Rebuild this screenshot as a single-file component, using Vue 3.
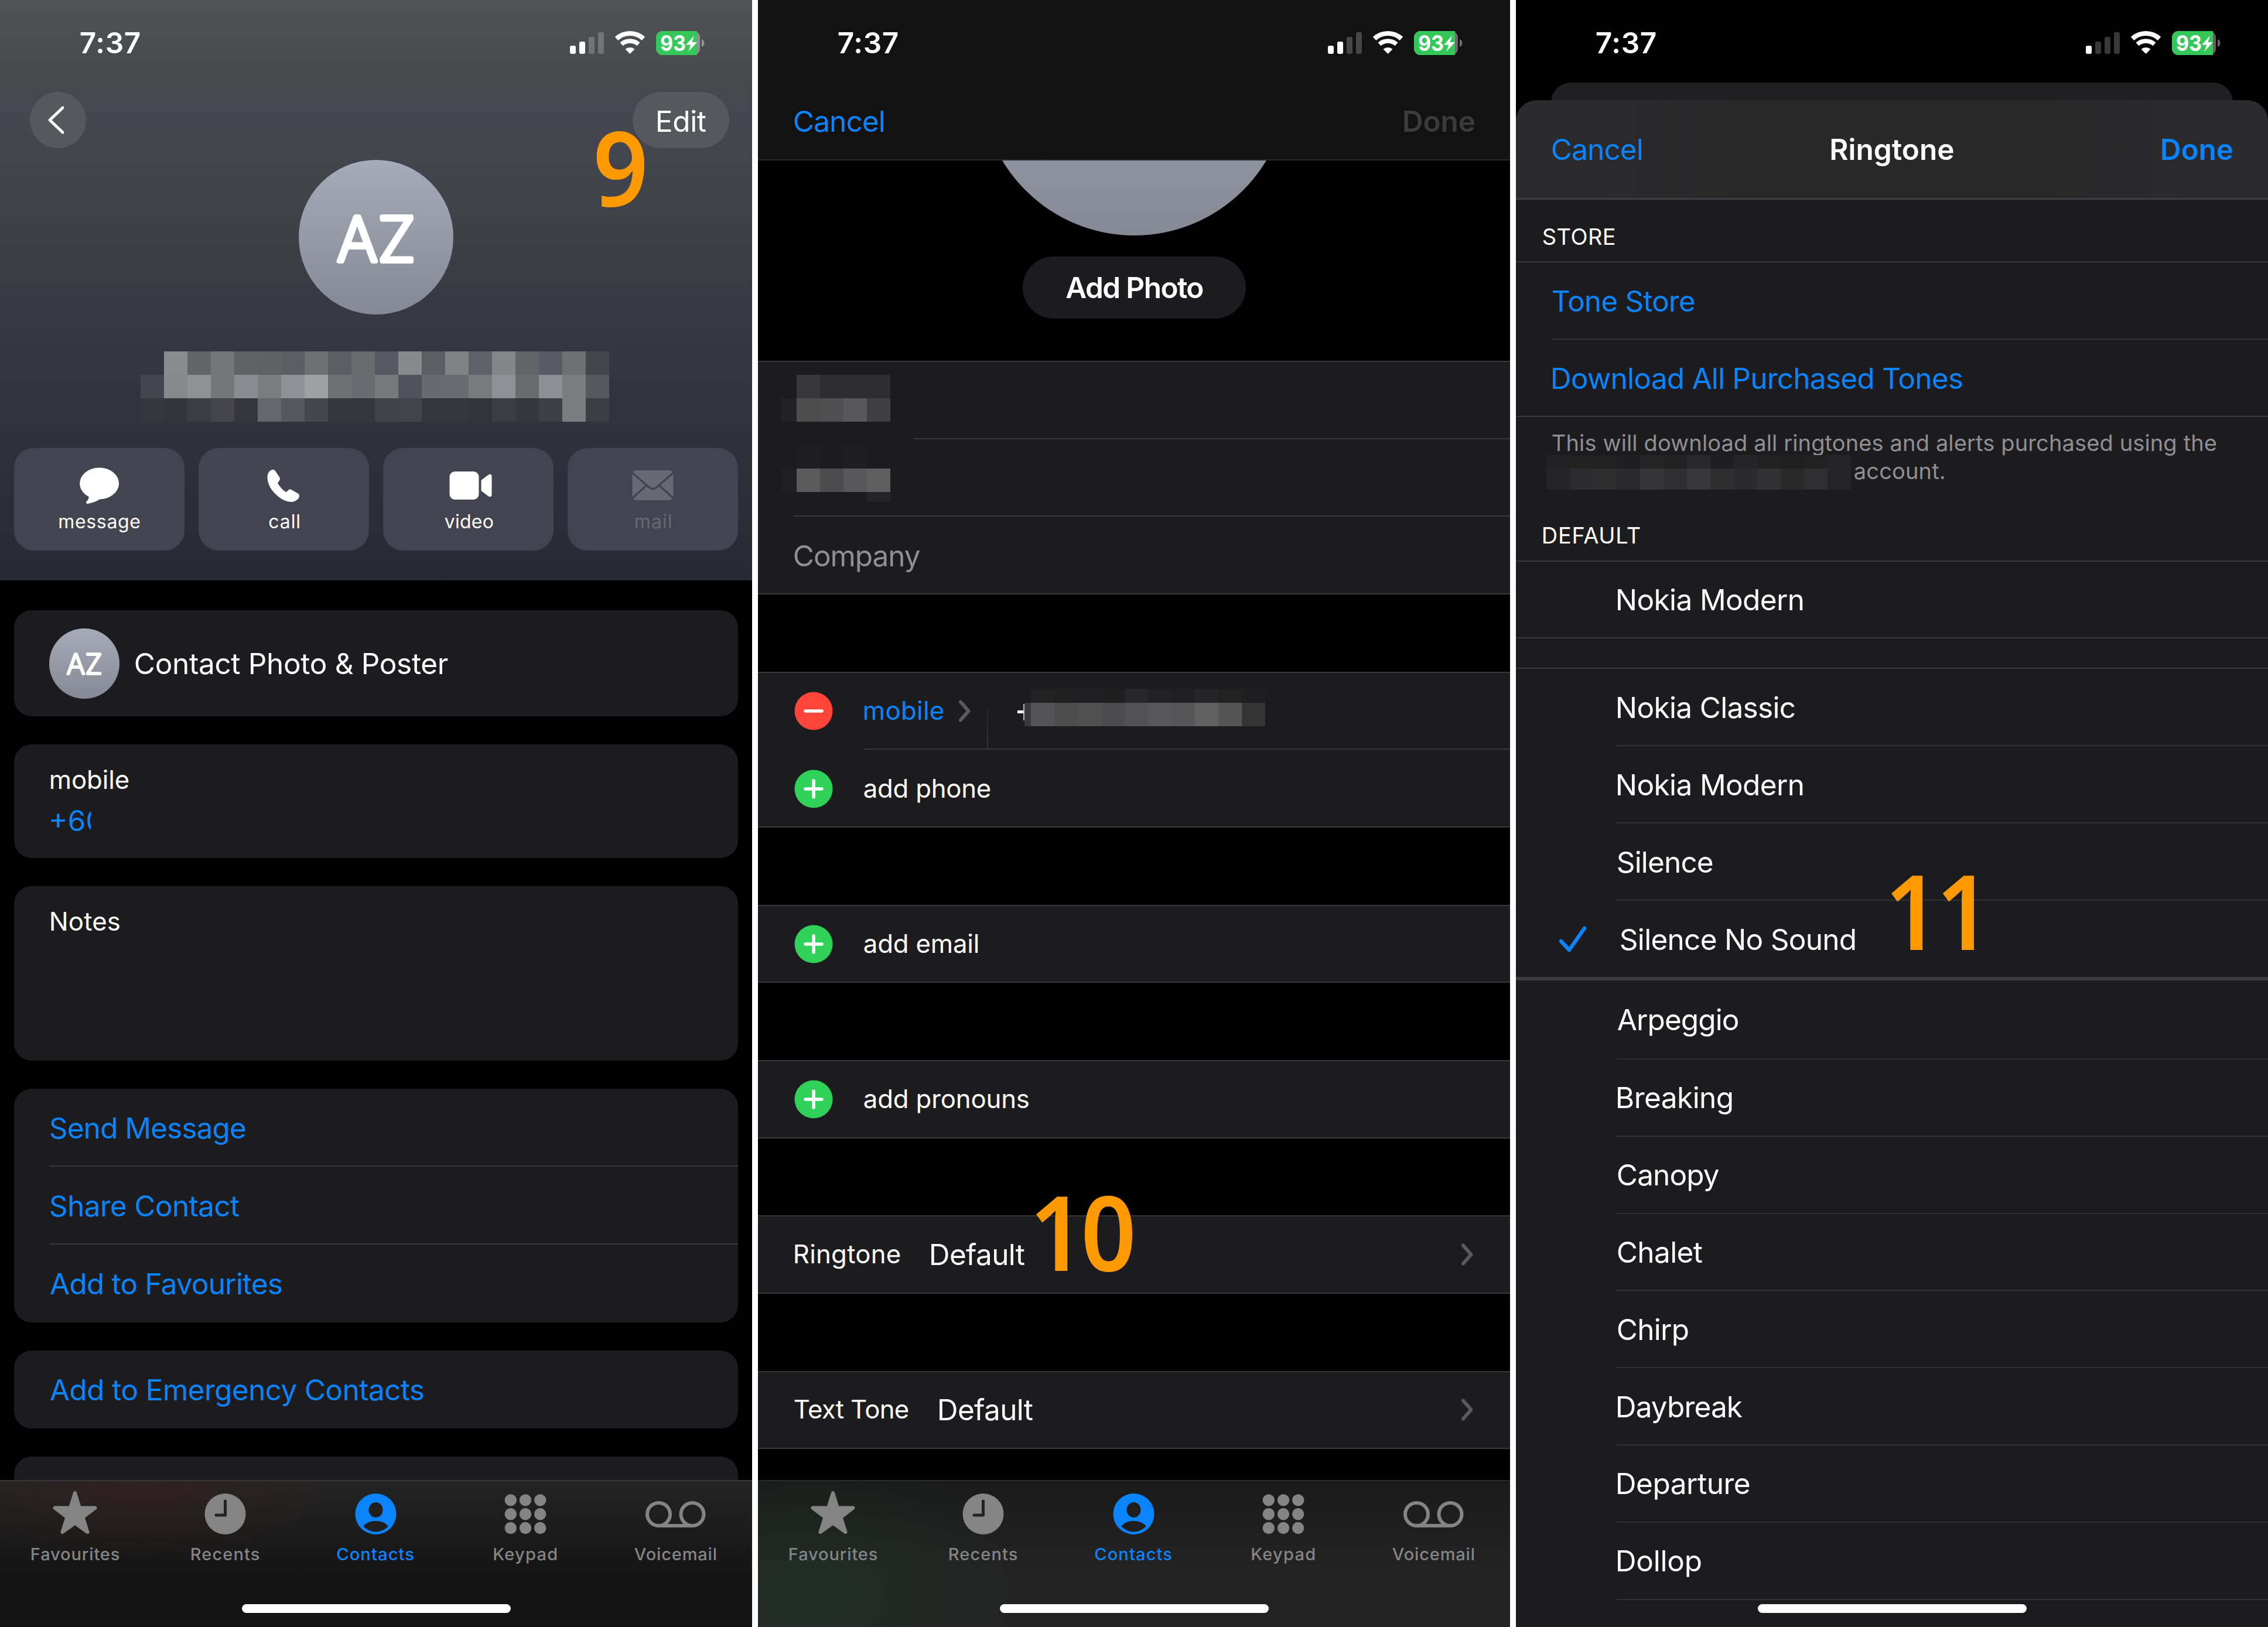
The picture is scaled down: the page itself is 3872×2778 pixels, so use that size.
<script setup>
import { h } from 'vue'

// Tracks a label so that its inked width equals the given number of pixels,
// and trims the side bearings so the box hugs the glyphs.
const nudge = 0.8
const pen = document.createElement('canvas').getContext('2d')
const vFit = {
  mounted(el, { value }) {
    const cs = getComputedStyle(el)
    pen.font = `${cs.fontWeight} ${cs.fontSize} ${cs.fontFamily}`
    const text = el.textContent.trim()
    const m = pen.measureText(text)
    const range = document.createRange()
    range.selectNodeContents(el)
    const natural = range.getBoundingClientRect().width
    const left = -m.actualBoundingBoxLeft
    const right = m.width - m.actualBoundingBoxRight
    const gaps = text.length - 1
    const spacing = gaps && value ? (value - (natural - left - right)) / gaps : 0
    el.style.letterSpacing = `${spacing}px`
    el.style.marginLeft = `${nudge - left}px`
    el.style.marginRight = `${-nudge - right - spacing}px`
  },
}

const Avatar = () =>
  h('svg', { viewBox: '0 0 264 264', class: 'avatar-svg' }, [
    h('text', {
      x: 65.5, y: 172.5, 'font-family': 'Inter, sans-serif',
      'font-size': 105, 'font-weight': 240, fill: '#fff', stroke: '#fff',
      'stroke-width': 8, 'stroke-linejoin': 'round', textLength: 134,
    }, 'AZ'),
  ])

const Chevron = () =>
  h('svg', { width: 22, height: 38, viewBox: '0 0 22 38' }, [
    h('path', {
      d: 'M4 3.5 L17.5 19 L4 34.5', fill: 'none', stroke: '#5a5a5e',
      'stroke-width': 6, 'stroke-linecap': 'round', 'stroke-linejoin': 'round',
    }),
  ])

const Mosaic = (props) =>
  h('div', { class: 'mosaic' }, props.rows.map((row) =>
    h('div', { style: { display: 'flex', height: `${row.h}px` } }, row.cells.map((c) =>
      h('i', { style: { width: `${c[1] || 40}px`, background: c[0] || 'transparent' } })))))
Mosaic.props = ['rows']

const px = (h, list, lead) => ({
  h,
  cells: [...(lead ? [lead] : []), ...list.split(' ').map((c) => [c === '-' ? '' : `#${c}`])],
})

const nameMosaic = [
  px(40, '- 8a8b8f 626366 757679 616265 606164 5b5f63 6e6f73 5a5d61 6a6b6f 555962 88898d 5b5e62 818286 60616a 85868a 626367 595a63 6e6f73 44464d'),
  px(40, '42454d 86878a 8f9094 747579 8b8c91 7a7c80 8f9095 9fa0a4 6f7074 6a6a73 78797c 50535b 686871 6a6a73 797a7e 909196 6a6b6f 8e8f94 7a7b7f 55585f'),
  px(40, '34363d 32353c 3b3d45 45434b 34363d 66666f 57575f 45474e 34363d 34363d 404249 42434b 34363d 34363d 32343b 3b3d44 34363d 3d3e46 7b7c80 3c3e45'),
]
const firstMosaic = [px(40, '38383a 2d2d2f 2d2d2f 2d2d2f', ['', 27]), px(40, '4d4d4d 4f4f51 58585a 3f3f41', ['#212123', 27])]
const lastMosaic = [
  px(40, '1f1f21 1d1d1f 1f1f21 1c1c1e', ['', 27]),
  px(40, '5b5b5b 4c4c4e 575759 5f5f5f', ['#202022', 27]),
  px(17, '- - - 252527', ['', 27]),
]
const phoneMosaic = [
  px(24, '212122 202021 202022 1f1f20 272729 222224 202022 242426 212122 1e1e20', ['', 11]),
  px(40, '555557 4d4d4d 505050 4b4b4d 515153 575759 565658 616161 555555 343434', ['#3a3a3a', 11]),
]
const accountMosaic = [
  px(23, '222225 212122 212122 1f1f21 242425 222223 29292c 1f1f21 252528 212122 202021 212122 252528'),
  px(36, '252527 2c2c2f 2d2d2e 2a2a2d 353538 2f2f31 38383b 2e2e2f 2b2b2e 323234 29292a 2f2f32 252527'),
]

const phones = [
  { id: 'contact', bars: 2 },
  { id: 'edit', bars: 2 },
  { id: 'ringtone', bars: 1 },
]
const bars = [
  { x: 0, y: 25, h: 14 },
  { x: 16, y: 18, h: 21 },
  { x: 32, y: 10, h: 29 },
  { x: 48, y: 2, h: 37 },
]
const actions = [
  { id: 'message', w: 138 },
  { id: 'call', w: 52 },
  { id: 'video', w: 83 },
  { id: 'mail', w: 61 },
]
const links = [
  { t: 'Send Message', w: 333 },
  { t: 'Share Contact', w: 323 },
  { t: 'Add to Favourites', w: 395 },
]
const tabs = [
  { id: 'star', t: 'Favourites', w: 150 },
  { id: 'clock', t: 'Recents', w: 116 },
  { id: 'person', t: 'Contacts', w: 131 },
  { id: 'keys', t: 'Keypad', w: 107 },
  { id: 'tape', t: 'Voicemail', w: 140 },
]
const adders = [
  { t: 'add email', w: 195 },
  { t: 'add pronouns', w: 281 },
]
const tones = [
  { t: 'Ringtone', w: 180 },
  { t: 'Text Tone', w: 194 },
]
const custom = [
  { t: 'Nokia Classic', w: 302 },
  { t: 'Nokia Modern', w: 316 },
  { t: 'Silence', w: 162 },
  { t: 'Silence No Sound', w: 400, on: true },
]
const builtin = [
  { t: 'Arpeggio', w: 206 },
  { t: 'Breaking', w: 195 },
  { t: 'Canopy', w: 173 },
  { t: 'Chalet', w: 145 },
  { t: 'Chirp', w: 120 },
  { t: 'Daybreak', w: 213 },
  { t: 'Departure', w: 225 },
  { t: 'Dollop', w: 142 },
]
</script>

<template>
  <main class="board">
    <section v-for="p in phones" :key="p.id" class="phone" :class="p.id">
      <div class="status">
        <span v-fit="101" class="time">7:37</span>
        <svg width="230" height="41" viewBox="0 0 230 41">
          <rect v-for="(b, i) in bars" :key="i" :x="b.x" :y="b.y" width="10" :height="b.h" rx="3"
            fill="#fff" :opacity="i < p.bars ? 1 : 0.22" />
          <g fill="none" stroke="#fff">
            <path d="M79.5 13 A34 34 0 0 1 125.5 13" stroke-width="8" />
            <path d="M88 22.5 A22 22 0 0 1 117 22.5" stroke-width="7.5" />
          </g>
          <path d="M102.500 39 L94.500 31 A12 12 0 0 1 110.500 31 Z" fill="#fff" />
          <rect x="147" y="0" width="75" height="41" rx="11" fill="#fff" fill-opacity=".38" />
          <path d="M158 0 H217 V41 H158 A11 11 0 0 1 147 30 V11 A11 11 0 0 1 158 0Z" fill="#34c759" />
          <path d="M225 14 a7 7 0 0 1 0 13z" fill="#fff" fill-opacity=".4" />
          <text x="154" y="34" font-size="37.500" font-weight="700" textLength="44" lengthAdjust="spacingAndGlyphs" fill="#fff">93</text>
          <path d="M212 8 L198 23.500 H206 L202.500 35 L217 19 H208.500Z" fill="#fff" />
        </svg>
      </div>

      <template v-if="p.id === 'contact'">
        <div class="hero-nav">
          <div class="back">
            <svg width="32" height="50" viewBox="0 0 32 50">
              <path d="M27 4 L5 25 L27 46" fill="none" stroke="#fff" stroke-width="5" stroke-linecap="round" stroke-linejoin="round" />
            </svg>
          </div>
          <div class="edit-pill"><span v-fit="83">Edit</span></div>
        </div>
        <div class="avatar"><Avatar /></div>
        <Mosaic class="name" :rows="nameMosaic" />
        <div class="actions">
          <div v-for="a in actions" :key="a.id" class="action" :class="{ off: a.id === 'mail' }">
            <svg width="100" height="66" viewBox="0 0 100 66">
              <g v-if="a.id === 'message'" fill="#fff">
                <ellipse cx="49.600" cy="28.500" rx="33.500" ry="27" />
                <path d="M32 46 q1 9 -5 14 q0 4 4 3 q14 -3 21 -9z" />
              </g>
              <path v-else-if="a.id === 'call'" fill="#fff"
                d="M28.500 5.500 C24 7 21.500 12 21.500 19 C22 30 28 40 37 48 C45 56 55 60.500 64 60 C71 59 76 54 76 50 C76 47 74 45.500 71 44 L63 39.500 C61 38 59 38 57 40 L54 43 C50 42 44 36 39 28 L42 23.500 C43.500 21 43 19.500 42 17.500 L35 7 C33 5 31 4.600 28.500 5.500Z" />
              <g v-else-if="a.id === 'video'" fill="#fff">
                <rect x="17.500" y="8" width="50" height="48" rx="9" />
                <path d="M71.500 23 L84 13.500 Q89 11 89.500 16 V48 Q89 53 84 50.500 L71.500 41Z" />
              </g>
              <g v-else>
                <rect x="14.500" y="6" width="70" height="51" rx="7" fill="#686a73" />
                <path d="M13 9 L43 35 Q49.500 40.500 56 35 L86 9 M13 55 L39 31.500 M86 55 L60 31.500" fill="none" stroke="#42454f" stroke-width="3.500" />
              </g>
            </svg>
            <span v-fit="a.w">{{ a.id }}</span>
          </div>
        </div>
        <div class="cards">
          <div class="card poster">
            <div class="avatar small"><Avatar /></div>
            <span v-fit="534">Contact Photo &amp; Poster</span>
          </div>
          <div class="card number">
            <div class="sub"><span v-fit="133">mobile</span></div>
            <div class="value blue"><span v-fit="0">+60</span></div>
          </div>
          <div class="card notes"><div class="sub"><span v-fit="117">Notes</span></div></div>
          <div class="card">
            <div v-for="l in links" :key="l.t" class="link blue"><span v-fit="l.w">{{ l.t }}</span></div>
          </div>
          <div class="card"><div class="link blue"><span v-fit="637">Add to Emergency Contacts</span></div></div>
          <div class="card"><div class="link"></div></div>
        </div>
        <div class="mark m9"><span v-fit="88">9</span></div>
      </template>

      <template v-else-if="p.id === 'edit'">
        <div class="edit-nav">
          <span v-fit="153" class="blue">Cancel</span>
          <span v-fit="121" class="dim">Done</span>
        </div>
        <div class="photo">
          <div class="big-circle"></div>
          <div class="add-photo"><span v-fit="233">Add Photo</span></div>
        </div>
        <div class="form">
          <div class="group">
            <div class="row first"><Mosaic :rows="firstMosaic" /></div>
            <div class="row last"><Mosaic :rows="lastMosaic" /></div>
            <div class="row company"><span v-fit="215">Company</span></div>
          </div>
          <div class="group">
            <div class="row inset phone-row">
              <svg width="66" height="66" viewBox="0 0 66 66">
                <circle cx="33" cy="33" r="32.500" fill="#ff453a" />
                <path d="M19 33 H47" stroke="#fff" stroke-width="5.500" stroke-linecap="round" />
              </svg>
              <div class="kind blue"><span v-fit="135">mobile</span></div>
              <Chevron />
              <div class="rule"></div>
              <div class="cut"></div>
              <Mosaic :rows="phoneMosaic" />
            </div>
            <div class="row adder">
              <svg width="66" height="66" viewBox="0 0 66 66">
                <circle cx="33" cy="33" r="32.500" fill="#30d158" />
                <path d="M19 33 H47 M33 19 V47" stroke="#fff" stroke-width="5.500" stroke-linecap="round" />
              </svg>
              <span v-fit="216">add phone</span>
            </div>
          </div>
          <div v-for="a in adders" :key="a.t" class="group">
            <div class="row adder">
              <svg width="66" height="66" viewBox="0 0 66 66">
                <circle cx="33" cy="33" r="32.500" fill="#30d158" />
                <path d="M19 33 H47 M33 19 V47" stroke="#fff" stroke-width="5.500" stroke-linecap="round" />
              </svg>
              <span v-fit="a.w">{{ a.t }}</span>
            </div>
          </div>
          <div v-for="t in tones" :key="t.t" class="group">
            <div class="row tone">
              <span v-fit="t.w" class="key">{{ t.t }}</span>
              <div class="val"><span v-fit="160">Default</span></div>
              <Chevron />
            </div>
          </div>
        </div>
        <div class="mark m10"><span v-fit="163">10</span></div>
      </template>

      <template v-else>
        <div class="back-sheet"></div>
        <div class="sheet">
          <div class="sheet-nav">
            <span v-fit="153" class="blue">Cancel</span>
            <span v-fit="209" class="title">Ringtone</span>
            <span v-fit="121" class="blue title">Done</span>
          </div>
          <div class="head store"><span v-fit="122">STORE</span></div>
          <div class="opt shop blue"><span v-fit="242">Tone Store</span></div>
          <div class="opt shop end blue"><span v-fit="699">Download All Purchased Tones</span></div>
          <div class="foot">
            <div><span v-fit="1134">This will download all ringtones and alerts purchased using the</span></div>
            <div class="second"><span v-fit="153">account.</span></div>
            <Mosaic class="account" :rows="accountMosaic" />
          </div>
          <div class="head default"><span v-fit="165">DEFAULT</span></div>
          <div class="opt full"><span v-fit="316">Nokia Modern</span></div>
          <div class="spacer"></div>
          <div v-for="o in custom" :key="o.t" class="opt" :class="{ on: o.on }">
            <svg v-if="o.on" class="check" width="48" height="46" viewBox="0 0 48 46">
              <path d="M4 26 L18 41 L44 4" fill="none" stroke="#0a84ff" stroke-width="6.500" stroke-linecap="round" stroke-linejoin="round" />
            </svg>
            <span v-fit="o.w">{{ o.t }}</span>
          </div>
          <div class="thick"></div>
          <div v-for="o in builtin" :key="o.t" class="opt tight"><span v-fit="o.w">{{ o.t }}</span></div>
        </div>
        <div class="mark m11"><span v-fit="138">11</span></div>
      </template>

      <nav v-if="p.id !== 'ringtone'" class="tabs">
        <div v-for="t in tabs" :key="t.id" class="tab" :class="{ active: t.id === 'person' }">
          <svg width="120" height="84" viewBox="0 0 120 84" fill="currentColor">
            <path v-if="t.id === 'star'" stroke="currentColor" stroke-width="6" stroke-linejoin="round"
              d="M60 9 L67.800 34.500 L94.500 34.500 L73.500 50.500 L81.500 76 L60 60.500 L38.500 76 L46.500 50.500 L25.500 34.500 L52.200 34.500Z" />
            <g v-else-if="t.id === 'clock'">
              <circle cx="60.500" cy="45" r="35" />
              <path d="M60.500 23 V47 H45" fill="none" stroke="#222" stroke-width="5" stroke-linecap="round" stroke-linejoin="round" />
            </g>
            <g v-else-if="t.id === 'person'">
              <circle cx="61.500" cy="45" r="35" />
              <ellipse cx="61.500" cy="38" rx="12" ry="13" fill="#1e1e1e" />
              <path d="M40 66 Q47.500 57 61.500 57 Q75.500 57 83 66 Q73.500 75.500 61.500 75.500 Q49.500 75.500 40 66" fill="#1e1e1e" />
            </g>
            <g v-else-if="t.id === 'keys'">
              <circle v-for="n in 9" :key="n" :cx="35.800 + ((n - 1) % 3) * 25.200" :cy="21.400 + Math.floor((n - 1) / 3) * 23.800" r="10.200" />
            </g>
            <g v-else fill="none" stroke="currentColor" stroke-width="6">
              <circle cx="32.500" cy="45.500" r="19.500" />
              <circle cx="90" cy="45.500" r="19.500" />
              <path d="M32.500 65 H90" />
            </g>
          </svg>
          <span v-fit="t.w">{{ t.t }}</span>
        </div>
      </nav>
      <div class="home"></div>
    </section>
  </main>
</template>

<style>
body {
  margin: 0;
  background: #fff;
}
.avatar-svg {
  display: block;
  width: 100%;
  height: 100%;
}
.mosaic {
  flex: none;
}
.mosaic i {
  flex: none;
}
</style>

<style scoped>
.board {
  display: flex;
  gap: 10px;
  width: 3872px;
  height: 2778px;
  font-family: Inter, sans-serif;
  font-size: 49.5px;
  line-height: 60px;
  color: #fff;
}
.board * {
  box-sizing: border-box;
}
.board span {
  display: inline-block;
  white-space: pre;
}
.phone {
  position: relative;
  display: flex;
  flex-direction: column;
  width: 1284px;
  height: 2778px;
  overflow: hidden;
  background: #000;
}
.phone svg {
  display: block;
  flex: none;
}
.blue {
  color: #0a84ff;
}
.status {
  display: flex;
  justify-content: space-between;
  align-items: center;
  flex: none;
  height: 146px;
  padding: 0 81px 0 137px;
}
.time {
  font-weight: 600;
}
.contact {
  background: linear-gradient(180deg, #515256 0, #46484c 145px, #454850 175px, #40424a 350px, #363941 540px, #2e3039 800px, #282a33 991px, #000 991px);
}
.hero-nav {
  display: flex;
  justify-content: space-between;
  margin-top: 11px;
  padding: 0 39px 0 51px;
}
.back,
.edit-pill {
  display: flex;
  align-items: center;
  height: 96px;
  border-radius: 48px;
  background: #56585d;
}
.back {
  width: 96px;
  padding-left: 29px;
}
.edit-pill {
  justify-content: center;
  width: 165px;
  padding: 4px 0 0 2px;
}
.avatar {
  flex: none;
  align-self: center;
  width: 264px;
  height: 264px;
  margin-top: 20px;
  border-radius: 50%;
  background: linear-gradient(180deg, #a5abb9, #858993);
}
.name {
  height: 120px;
  margin: 63px 0 0 240px;
}
.actions {
  display: flex;
  gap: 24px;
  margin-top: 45px;
  padding: 0 24px;
}
.action {
  display: flex;
  flex: 1;
  flex-direction: column;
  align-items: center;
  height: 175px;
  padding-top: 32px;
  border-radius: 34px;
  background: #42454f;
  font-size: 32px;
  line-height: 40px;
}
.action span {
  margin-top: 8px;
}
.off {
  color: #666872;
}
.cards {
  display: flex;
  flex-direction: column;
  gap: 48px;
  margin-top: 102px;
  padding: 0 24px;
}
.card {
  border-radius: 30px;
  background: #1c1c1e;
}
.poster {
  display: flex;
  align-items: center;
  gap: 26px;
  height: 181px;
  padding-left: 60px;
}
.avatar.small {
  width: 120px;
  height: 120px;
  margin: 0;
}
.number {
  height: 194px;
  padding: 31px 62px;
}
.notes {
  height: 298px;
  padding: 31px 62px;
}
.sub {
  display: flex;
  font-size: 43.7px;
}
.value {
  display: flex;
  width: 69px;
  margin-top: 9px;
  overflow: hidden;
}
.link {
  display: flex;
  align-items: center;
  position: relative;
  height: 133px;
  padding-left: 61px;
}
.link + .link::before {
  content: '';
  position: absolute;
  top: -2px;
  left: 60px;
  right: 0;
  height: 2px;
  background: #38383a;
}
.edit-nav {
  display: flex;
  justify-content: space-between;
  align-items: center;
  flex: none;
  height: 128px;
  padding: 0 61px 5px 61px;
}
.edit .status,
.edit-nav {
  background: #121212;
}
.edit-nav {
  border-bottom: 2px solid #2a2a2a;
}
.dim {
  color: #3b3b3b;
  font-weight: 600;
}
.photo {
  display: flex;
  flex: none;
  flex-direction: column;
  align-items: center;
  height: 342px;
  overflow: hidden;
}
.big-circle {
  flex: none;
  width: 525px;
  height: 525px;
  margin-top: -397px;
  border-radius: 50%;
  background: linear-gradient(180deg, #a5abb9 0, #8f939f 75%, #858993);
}
.add-photo {
  display: flex;
  justify-content: center;
  align-items: center;
  width: 381px;
  height: 106px;
  margin-top: 36px;
  padding-bottom: 1px;
  border-radius: 53px;
  background: #1c1c1e;
  font-weight: 600;
}
.form {
  --row: 132.67px;
  display: flex;
  flex-direction: column;
  gap: var(--row);
}
.group {
  background: #1c1c1e;
  box-shadow: inset 0 2px #38383a, inset 0 -1px #38383a, 0 1px #38383a;
}
.row {
  display: flex;
  align-items: center;
  position: relative;
  height: var(--row);
  padding-left: 62px;
}
.row + .row::before {
  content: '';
  position: absolute;
  top: -1px;
  left: 60px;
  right: 0;
  height: 2px;
  background: #38383a;
}
.first,
.last {
  align-items: flex-start;
  padding-left: 39px;
}
.first {
  padding-top: 24px;
}
.last {
  padding-top: 11px;
}
.row.last::before {
  left: 266px;
}
.company {
  padding-top: 3px;
  padding-left: 61px;
  color: #8f8f95;
}
.adder,
.phone-row,
.tone {
  font-size: 43.7px;
}
.adder,
.phone-row {
  padding-top: 2px;
}
.adder {
  gap: 52px;
}
.row.inset + .row::before {
  left: 180px;
}
.kind {
  display: flex;
  width: 161px;
  margin-left: 53px;
}
.rule {
  align-self: flex-end;
  width: 2px;
  height: 72px;
  margin-left: 27px;
  background: linear-gradient(180deg, #222224, #38383a);
}
.cut {
  width: 12px;
  height: 28px;
  margin: 4px 0 0 50px;
  border-right: 2px solid #b8b8b8;
  background: linear-gradient(#fff, #fff) 0 11px / 100% 5px no-repeat;
}
.phone-row .mosaic {
  align-self: flex-start;
  margin-top: 27px;
}
.tone {
  padding-right: 62px;
}
.tone .key {
  flex: none;
}
.val {
  display: flex;
  flex: 1;
  padding-left: 53px;
  font-size: 49.5px;
}
.back-sheet {
  flex: none;
  height: 60px;
  margin: -5px 60px 0;
  border-radius: 34px 34px 0 0;
  background: #202022;
}
.sheet {
  display: flex;
  flex-direction: column;
  flex: 1;
  margin-top: -30px;
  overflow: hidden;
  border-radius: 36px 36px 0 0;
  background: #1c1c1e;
}
.sheet > * {
  flex: none;
}
.sheet-nav {
  display: grid;
  grid-template-columns: 1fr auto 1fr;
  align-items: center;
  height: 170px;
  padding: 0 61px 0 61px;
  border-bottom: 3px solid #3e3e40;
  background: linear-gradient(90deg, #2b2b2d, #282829 30%, #282829 70%, #2b2b2d);
}
.sheet-nav span {
  justify-self: start;
}
.sheet-nav span:last-child {
  justify-self: end;
}
.title {
  font-weight: 600;
}
.head {
  display: flex;
  align-items: flex-end;
  padding: 0 0 11px 46px;
  border-bottom: 2px solid #3a3a3c;
  font-size: 38px;
}
.store {
  height: 107px;
  padding-bottom: 12px;
}
.default {
  height: 131px;
  padding-bottom: 13px;
}
.opt {
  display: flex;
  align-items: center;
  position: relative;
  height: 132px;
  padding: 0 0 2px 173px;
}
.opt::after {
  content: '';
  position: absolute;
  bottom: 0;
  left: 171px;
  right: 0;
  height: 2px;
  background: #313133;
}
.shop {
  padding-top: 1px;
  padding-left: 62px;
}
.shop::after {
  left: 60px;
}
.end::after,
.full::after {
  left: 0;
  background: #38383a;
}
.foot {
  position: relative;
  height: 116px;
  padding: 20px 61px 0;
  color: #8f8f95;
  font-size: 38px;
  line-height: 48px;
}
.foot > div:not(.account) {
  display: flex;
}
.foot .second {
  padding-left: 516px;
}
.account {
  position: absolute;
  top: 65px;
  left: 52px;
}
.full {
  height: 131px;
}
.spacer {
  height: 52px;
  border-bottom: 2px solid #38383a;
}
.full,
.spacer ~ .opt {
  padding-top: 1px;
}
.on {
  height: 130px;
  padding: 0 0 0 73px;
}
.on::after {
  display: none;
}
.check {
  margin-right: 57px;
}
.thick {
  height: 6px;
  background: #3c3c3e;
}
.tight {
  height: 131.8px;
}
.thick + .opt {
  height: 135px;
}
.mark {
  position: absolute;
  color: #f90;
  font: 600 178px/178px 'Noto Sans', sans-serif;
  transform: scaleX(0.93);
  transform-origin: 0 0;
}
.m9 {
  top: 194px;
  left: 1017px;
}
.m10 {
  top: 2012px;
  left: 474px;
}
.m11 {
  top: 1464px;
  left: 640px;
}
.tabs {
  position: absolute;
  inset: 2527px 0 0;
  display: flex;
  align-items: flex-start;
  padding: 11px 4px 0 0;
  border-top: 2px solid #38383a;
  background: radial-gradient(340px 140px at 240px 0, rgba(70, 30, 34, 0.4), transparent), linear-gradient(180deg, #242424, #131313 70%);
  color: #858485;
  font-size: 29px;
  font-weight: 500;
  line-height: 36px;
}
.edit .tabs {
  border-color: #2a2a2b;
  background: radial-gradient(340px 260px at 90px 190px, rgba(28, 60, 42, 0.4), transparent), linear-gradient(180deg, #1a1a1a, #232323 60%);
}
.tab {
  display: flex;
  flex: 1;
  flex-direction: column;
  align-items: center;
  gap: 12px;
}
.tab.active {
  color: #0a84ff;
}
.home {
  position: absolute;
  bottom: 24px;
  left: 413px;
  width: 459px;
  height: 15px;
  border-radius: 8px;
  background: #fff;
}
</style>
